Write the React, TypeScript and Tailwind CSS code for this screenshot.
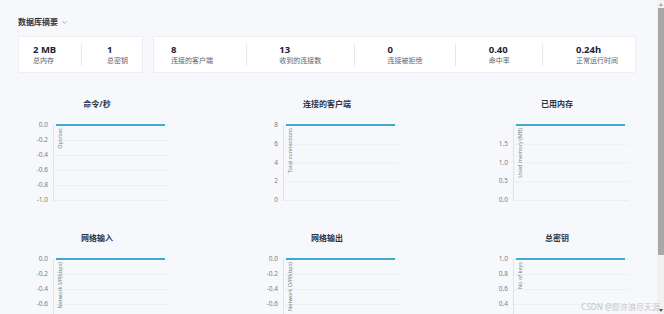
import React from "react";
import { ChevronDown } from "lucide-react";

type ChartProps = {
  title: string;
  labels: string[];
  yTitle: string;
};

function Chart({ title, labels, yTitle }: ChartProps) {
  const n = labels.length - 1;
  const lines = labels.map((_, i) => (i * 75) / n);
  return (
    <div className="flex w-[158px] flex-col">
      <div className="h-[12px] text-center text-[8px] font-bold leading-[12px] text-[#2b3445]">{title}</div>
      <div className="mt-[15px] flex">
        <div className="-mt-[4px] flex h-[83px] w-[35px] flex-col items-end justify-between pr-[5px]">
          {labels.map((l, i) => (
            <div key={i} className="h-[8px] text-[6.5px] leading-[8px] text-[#7a7f88]">
              {l}
            </div>
          ))}
        </div>
        <div className="relative h-[76px] w-[115px] border-l border-[#dfe2e7]">
          <svg className="absolute left-0 top-0 overflow-visible" width="115" height="76">
            {lines.map((y, i) => (
              <line key={i} x1="0" x2="115" y1={y + 0.5} y2={y + 0.5} stroke="#eceef2" strokeWidth="1" />
            ))}
            <line x1="2" x2="111" y1="0" y2="0" stroke="#3fa8d6" strokeWidth="2" />
          </svg>
          <div className="absolute left-[3px] top-[3px] rotate-180 whitespace-nowrap text-[5.5px] leading-[6px] text-[#7a7f88] [writing-mode:vertical-rl]">
            {yTitle}
          </div>
        </div>
      </div>
    </div>
  );
}

function Stat({ value, label }: { value: string; label: string }) {
  return (
    <div className="flex flex-col">
      <div className="text-[9.5px] font-bold leading-[12px] text-[#1c2233]">{value}</div>
      <div className="text-[7px] leading-[10px] text-[#5d6370]">{label}</div>
    </div>
  );
}

function Divider() {
  return <div className="h-[22px] w-px bg-[#e6e8ec]" />;
}

const neg = ["0.0", "-0.2", "-0.4", "-0.6", "-0.8", "-1.0"];

export default function App() {
  return (
    <div className="relative flex h-[314px] w-[664px] overflow-hidden bg-[#f7f8fc] font-['Noto_Sans','Noto_Sans_CJK_SC',sans-serif]">
      <div className="flex w-[657px] flex-col overflow-hidden">
        <div className="h-[3px] bg-[#fdfdfe]" />
        <div className="flex flex-col px-[18px] pt-[16px]">
          <div className="flex h-[12px] items-center gap-[3px]">
            <span className="text-[8px] font-bold leading-[12px] text-[#2b3445]">数据库摘要</span>
            <ChevronDown size={7} strokeWidth={2} className="text-[#6b7280]" />
          </div>
          <div className="mt-[8px] flex gap-[10px]">
            <div className="flex h-[37px] w-[125px] items-center justify-between rounded-[2px] border border-[#eceef2] bg-white px-[14px]">
              <Stat value="2 MB" label="总内存" />
              <Divider />
              <Stat value="1" label="总密钥" />
            </div>
            <div className="flex h-[37px] w-[483px] items-center justify-between rounded-[2px] border border-[#eceef2] bg-white px-[17px]">
              <Stat value="8" label="连接的客户端" />
              <Divider />
              <Stat value="13" label="收到的连接数" />
              <Divider />
              <Stat value="0" label="连接被拒绝" />
              <Divider />
              <Stat value="0.40" label="命中率" />
              <Divider />
              <Stat value="0.24h" label="正常运行时间" />
            </div>
          </div>
          <div className="mt-[25px] flex flex-col gap-[28px]">
            <div className="flex w-[618px] justify-between">
              <Chart title="命令/秒" labels={neg} yTitle="Ops/sec" />
              <Chart title="连接的客户端" labels={["8", "6", "4", "2", "0"]} yTitle="Total connections" />
              <Chart title="已用内存" labels={["", "1.5", "1.0", "0.5", "0.0"]} yTitle="Used memory (MB)" />
            </div>
            <div className="flex w-[618px] justify-between">
              <Chart title="网络输入" labels={neg} yTitle="Network I/P(kbps)" />
              <Chart title="网络输出" labels={neg} yTitle="Network O/P(kbps)" />
              <Chart title="总密钥" labels={["1.0", "0.8", "0.6", "0.4", "0.2", "0.0"]} yTitle="No of keys" />
            </div>
          </div>
        </div>
      </div>
      <div className="flex w-[7px] flex-col bg-[#f1f1f1]">
        <div className="flex h-[8px] items-center justify-center">
          <div className="h-0 w-0 border-x-[2px] border-b-[3px] border-x-transparent border-b-[#a3a3a3]" />
        </div>
        <div className="ml-[1px] h-[247px] w-[6px] bg-[#a8a8a8]" />
        <div className="flex-1" />
        <div className="flex h-[8px] items-center justify-center">
          <div className="h-0 w-0 border-x-[2px] border-t-[3px] border-x-transparent border-t-[#505050]" />
        </div>
      </div>
      <div className="absolute bottom-[2px] right-[4px] text-[8px] leading-[11px] text-[#c2c4c8]">CSDN @愿许浪尽天涯</div>
    </div>
  );
}
